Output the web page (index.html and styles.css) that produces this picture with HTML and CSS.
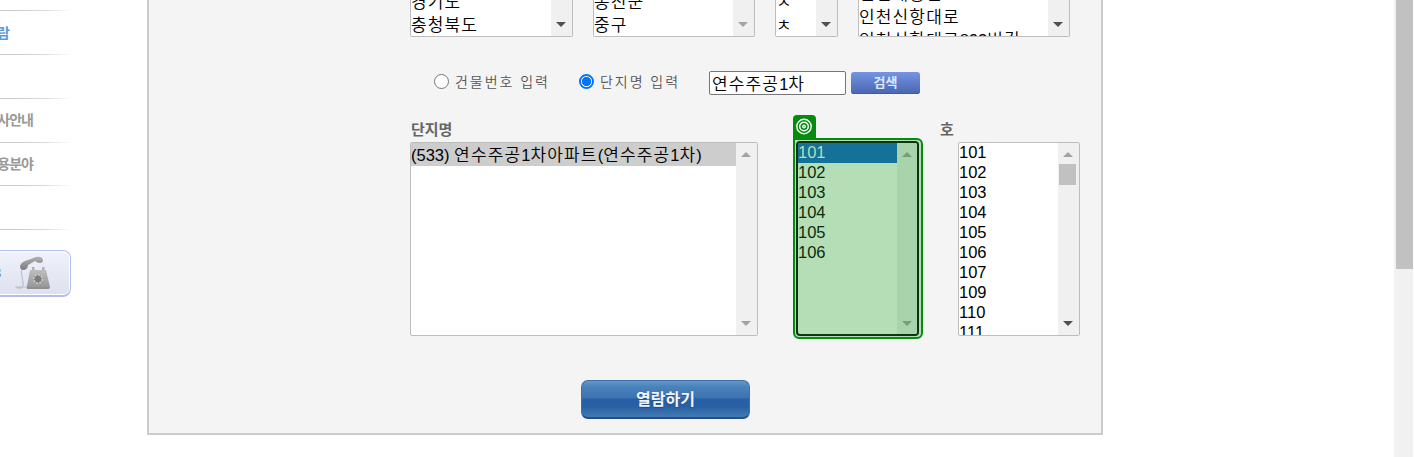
FILE: index.html
```html
<!DOCTYPE html>
<html lang="ko">
<head>
<meta charset="utf-8">
<title>열람하기</title>
<link rel="stylesheet" href="styles.css">
</head>
<body>
<div class="page">
  <aside class="side">
    <ul class="menu">
      <li class="menu-item first"></li>
      <li class="menu-item active">람</li>
      <li class="menu-item"></li>
      <li class="menu-item">사안내</li>
      <li class="menu-item short">용분야</li>
      <li class="menu-item"></li>
    </ul>
    <div class="call"><span class="call-no">3</span>
      <svg class="phone" viewBox="0 0 36 36" width="36" height="36">
        <defs>
          <linearGradient id="body" x1="0" y1="0" x2="0" y2="1"><stop offset="0" stop-color="#bdbdbd"/><stop offset="1" stop-color="#939393"/></linearGradient>
          <linearGradient id="hand" x1="0" y1="0" x2="0" y2="1"><stop offset="0" stop-color="#b0b0b0"/><stop offset="1" stop-color="#7c7c7c"/></linearGradient>
        </defs>
        <path d="M7 13C5 20 9 25 8 32C5 34 2 33 1 32H12" fill="none" stroke="#c0c0c4" stroke-width="1.2"/>
        <path d="M17 12h2.500v4H17zM27 12h2.500v4H27z" fill="#b0b0b0"/>
        <path d="M15 15H31L35 32Q35 34 33 34H13Q11 34 12 31Z" fill="url(#body)"/>
        <path d="M12 32.500h22v1H12z" fill="#888"/>
        <circle cx="23" cy="24" r="4.200" fill="#7c7c7c" stroke="#cacaca" stroke-width="1.600" stroke-dasharray="2 1.200"/>
        <path d="M5 12Q5 8 10 6L21 2Q27 1 28 5Q28 8 25 8Q22 8 20 6L13 10Q13 14 9 15Q5 15 5 12Z" fill="url(#hand)"/>
      </svg>
    </div>
  </aside>

  <main class="panel">
    <div class="row regions">
      <div class="list sido"><div class="opts"><div class="ko">경기도</div><div class="ko">충청북도</div></div><div class="bar"><i class="down"></i></div></div>
      <div class="list sigungu"><div class="opts"><div class="ko">옹진군</div><div class="ko">중구</div></div><div class="bar"><i class="down off"></i></div></div>
      <div class="list initial"><div class="opts"><div class="ko">ㅈ</div><div class="ko">ㅊ</div></div><div class="bar"><i class="down"></i></div></div>
      <div class="list road"><div class="opts"><div class="ko">인천대공원로</div><div class="ko">인천신항대로</div><div><span class="ko">인천신항대로</span>892<span class="ko">번길</span></div></div><div class="bar"><i class="down"></i></div></div>
    </div>

    <div class="row search">
      <label class="choice by-no"><span class="radio"></span>건물번호 입력</label>
      <label class="choice by-name"><span class="radio on"></span>단지명 입력</label>
      <div class="field"><span class="ko">연수주공</span>1<span class="ko">차</span></div>
      <div class="find">검색</div>
    </div>

    <div class="row results">
      <section class="col complex">
        <h3 class="label">단지명</h3>
        <div class="list tall"><div class="opts"><div class="picked">(533) <span class="ko">연수주공</span>1<span class="ko">차아파트</span>(<span class="ko">연수주공</span>1<span class="ko">차</span>)</div></div><div class="bar"><i class="up off"></i><i class="down off"></i></div></div>
      </section>
      <section class="col dong">
        <div class="tag"><svg viewBox="0 0 23 24" width="23" height="24"><g fill="none" stroke="#fff" stroke-width="1.400"><circle cx="11" cy="11.500" r="7.200"/><circle cx="11" cy="11.500" r="4.300"/></g><circle cx="11" cy="11.500" r="1.900" fill="#fff"/><circle cx="11" cy="11.500" r=".6" fill="#048c0e"/></svg></div>
        <div class="target">
          <div class="list focus"><div class="opts"><div class="chosen">101</div><div>102</div><div>103</div><div>104</div><div>105</div><div>106</div></div><div class="bar"><i class="up off"></i><i class="down off"></i></div></div>
        </div>
      </section>
      <section class="col ho">
        <h3 class="label">호</h3>
        <div class="list tall"><div class="opts"><div>101</div><div>102</div><div>103</div><div>104</div><div>105</div><div>106</div><div>107</div><div>109</div><div>110</div><div>111</div></div><div class="bar"><i class="up off"></i><b class="thumb"></b><i class="down"></i></div></div>
      </section>
    </div>

    <div class="submit">열람하기</div>
  </main>

  <div class="scroll"><div class="scroll-thumb"></div></div>
</div>
</body>
</html>
```
FILE: styles.css
```css
* { box-sizing: border-box; }
body { margin: 0; background: #fff; overflow: hidden; font-family: "Liberation Sans", "Noto Sans CJK KR", sans-serif; }
.page { display: flex; align-items: flex-start; width: 1414px; height: 457px; overflow: hidden; }

.side { width: 147px; flex: none; }
.menu { margin: 0; padding: 0; list-style: none; width: 72px; }
.menu-item {
  height: 44px; padding-bottom: 4px; display: flex; align-items: center; justify-content: flex-end; padding-right: 39px;
  font: bold 14px/20px "Noto Sans CJK KR", sans-serif; letter-spacing: -1px; color: #999; white-space: nowrap;
  background: linear-gradient(90deg, #cdcdcd 20%, #d8d8d8 60%, #fff) left bottom / 72px 1px no-repeat;
}
.menu-item.first { height: 11px; padding-bottom: 0; }
.menu-item.short { height: 43px; padding-bottom: 3px; }
.menu-item.active { color: #5b9ad8; padding-right: 63px; padding-bottom: 2px; }
.call {
  width: 71px; height: 47px; margin-top: 20px; display: flex; align-items: center; gap: 14px;
  border: 1px solid #b1bfe8; border-left: 0; border-bottom-width: 2px; border-radius: 0 8px 8px 0;
  background: linear-gradient(#eff2fb, #dde1ee); box-shadow: inset -1px 1px 0 #fff, inset 0 -1px 0 #fff;
}
.call-no { width: 1px; display: flex; justify-content: flex-end; font: bold 15px/20px "Liberation Sans", sans-serif; color: #555; }
.phone { display: block; }

.panel { width: 956px; height: 435px; flex: none; padding-left: 261px; border: solid #cbcbcb; border-width: 0 2px 2px; background: #f4f4f4; }
.row { display: flex; align-items: flex-start; }
.list { display: flex; border: 1px solid #bdbdbd; border-radius: 2px; background: #fff; overflow: hidden; font-size: 16.500px; color: #000; }
.opts { flex: 1; min-width: 0; overflow: hidden; white-space: nowrap; line-height: 18px; }
.opts > div { height: 20px; }
.ko { font-family: "Noto Sans CJK KR", sans-serif; font-size: 17px; letter-spacing: 1.150px; font-weight: 350; }
.bar { width: 21px; flex: none; display: flex; flex-direction: column; align-items: flex-start; background: #f0f0f0; padding: 9px 0 9px 5px; }
.up, .down { border: solid transparent; border-width: 0 5px; height: 0; width: 0; }
.up { border-bottom: 5px solid #505050; }
.down { border-top: 5px solid #505050; margin-top: auto; }
.up.off { border-bottom-color: #a3a3a3; }
.down.off { border-top-color: #a3a3a3; }
.thumb { width: 17px; height: 21px; margin: 7px 0 0 -4px; background: #c1c1c1; }

.regions .list { height: 37px; border-top: 0; border-radius: 0 0 2px 2px; }
.regions .opts > div { height: 23px; line-height: 21px; }
.regions .opts > div:first-child { margin-top: -10px; }
.regions .road .opts > div:first-child { margin-top: -18px; }
.sido { width: 163px; }
.sigungu { width: 162px; margin-left: 20px; }
.initial { width: 63px; margin-left: 20px; }
.road { width: 212px; margin-left: 20px; }

.search { margin-top: 34px; height: 24px; padding-left: 24px; }
.choice { display: flex; align-items: center; height: 20px; gap: 6px; font: 350 14px/20px "Noto Sans CJK KR", sans-serif; letter-spacing: 1.950px; color: #555; white-space: nowrap; }
.by-no { width: 145px; }
.by-name { width: 130px; }
.radio { width: 15px; height: 15px; border: 1px solid #767676; border-radius: 50%; background: #fff; flex: none; }
.radio.on { border: 2px solid #0075ff; background: radial-gradient(circle, #0075ff 4.300px, #fff 5px); }
.field { width: 137px; height: 24px; padding-left: 2px; border: 1px solid #767676; border-radius: 2px; background: #fff; font-size: 16.500px; line-height: 22px; white-space: nowrap; }
.find { width: 69px; height: 22px; margin: 1px 0 0 5px; border-radius: 3px; background: linear-gradient(#7595e1, #4865b1); box-shadow: inset 0 -1px #405ba4; color: #dfe8ff; font: bold 13px/20px "Noto Sans CJK KR", sans-serif; text-align: center; }

.results { margin-top: 20px; height: 226px; }
.label { margin: 0; height: 27px; padding-left: 1px; font: bold 15px/27px "Noto Sans CJK KR", sans-serif; letter-spacing: 0; color: #666; }
.tall { height: 194px; }
.complex { width: 348px; }
.complex .picked { height: 23px; line-height: 21px; background: #cdcdcd; }
.dong { width: 130px; margin-left: 35px; }
.tag { width: 23px; height: 23px; border-radius: 4px 4px 0 0; background: #048c0e; }
.tag svg { display: block; }
.target { width: 130px; height: 201px; padding: 1px 2px 1px 1px; border: 2px solid #048c0e; border-radius: 0 6px 6px 6px; background: #b5deb6; }
.focus { height: 195px; border: 2px solid #0d3512; border-radius: 4px; background: #b5deb6; color: #082f0c; }
.focus .chosen { color: #b5deb6; background: #147198; }
.focus .bar { width: 20px; padding-bottom: 8px; background: #a9d3aa; }
.focus .up.off { border-bottom-color: #73a076; }
.focus .down.off { border-top-color: #73a076; }
.ho { width: 140px; margin-left: 17px; }
.ho .label { padding-left: 0; }
.ho .list { width: 122px; margin-left: 18px; }

.submit { width: 169px; height: 39px; margin: 39px 0 0 171px; border: 1px solid #416eac; border-bottom: 2px solid #264c8b; border-radius: 7px; background: linear-gradient(#629aca, #4b83bd 15%, #3c72b0 47%, #2860a6 50%, #285fa5 70%, #437bb1); color: #f2f5fa; font: bold 16px/35px "Noto Sans CJK KR", sans-serif; text-align: center; text-shadow: 0 1px 1px #244b7f; }

.scroll { width: 19px; height: 457px; margin-left: 291px; padding-left: 2px; background: #f1f1f1; flex: none; }
.scroll-thumb { width: 17px; height: 269px; background: #c1c1c1; }
```
